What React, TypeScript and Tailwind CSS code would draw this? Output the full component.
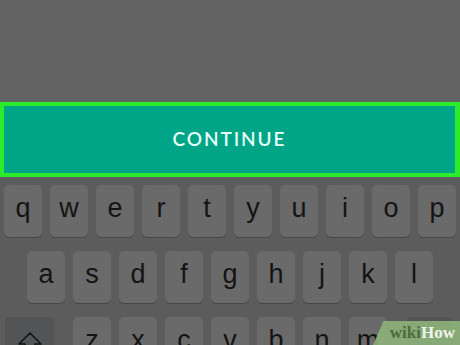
import React from "react";

const row1 = ["q", "w", "e", "r", "t", "y", "u", "i", "o", "p"];
const row2 = ["a", "s", "d", "f", "g", "h", "j", "k", "l"];
const row3 = ["z", "x", "c", "v", "b", "n", "m"];

function Key({ label }: { label: string }) {
  return (
    <div className="w-[38px] h-[52px] shrink-0 rounded-[5px] bg-[#6a6a6a] shadow-[0_1px_0_#474747] flex items-center justify-center pb-[6px] text-[27px] leading-none text-[#141414] font-['Liberation_Sans',sans-serif]">
      {label}
    </div>
  );
}

export default function App() {
  return (
    <div className="relative w-[460px] h-[345px] overflow-hidden bg-[#626262] flex flex-col">
      <div className="h-[102px] shrink-0" />

      {/* highlighted continue button */}
      <div className="h-[75px] shrink-0 border-y-4 border-l-4 border-r-[5px] border-[#2bec2b] bg-[#00a587] flex items-center justify-center">
        <span className="text-[19px] font-semibold tracking-[0.1em] text-[#e6fff8] font-['Lato',sans-serif]">
          CONTINUE
        </span>
      </div>

      {/* keyboard */}
      <div className="flex-1 bg-[#5c5c5c] pt-[8px] flex flex-col gap-[14px]">
        <div className="flex gap-[8px] pl-[4px]">
          {row1.map((k) => (
            <Key key={k} label={k} />
          ))}
        </div>
        <div className="flex gap-[8px] pl-[27px]">
          {row2.map((k) => (
            <Key key={k} label={k} />
          ))}
        </div>
        <div className="flex gap-[8px] pl-[5px]">
          <div className="w-[49px] h-[52px] shrink-0 rounded-[5px] bg-[#525456] flex justify-center pt-[15px]">
            <svg width="26" height="22" viewBox="0 0 26 22" fill="none" stroke="#141414" strokeWidth="1.6">
              <path d="M13 1 L24 12 H18 V21 H8 V12 H2 Z" strokeLinejoin="round" />
            </svg>
          </div>
          <div className="w-[3px] shrink-0" />
          {row3.map((k) => (
            <Key key={k} label={k} />
          ))}
          <div className="w-[4px] shrink-0" />
          <div className="w-[46px] h-[52px] shrink-0 rounded-[5px] bg-[#525456]" />
        </div>
      </div>

      {/* watermark */}
      <div className="absolute right-0 bottom-0 w-[87px] h-[24px] bg-[#8cb27a]/90 [clip-path:polygon(12%_0,100%_0,100%_100%,0_100%)] flex items-end justify-end pr-[5px] pb-[4px]">
        <span className="text-[17px] leading-none font-bold font-['Liberation_Serif',serif]">
          <span className="text-[#4e6b3c]">wiki</span>
          <span className="text-[#eef3ea]">How</span>
        </span>
      </div>
    </div>
  );
}
